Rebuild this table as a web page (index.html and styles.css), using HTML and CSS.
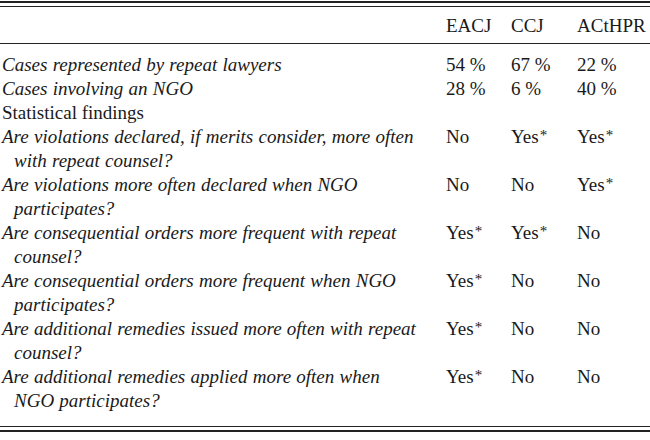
FILE: index.html
```html
<!DOCTYPE html>
<html>
<head>
<meta charset="utf-8">
<link rel="stylesheet" href="styles.css">
</head>
<body>
<div class="table">
  <div class="rule-thin"></div>
  <div class="head grid">
    <div class="cell"></div>
    <div class="cell">EACJ</div>
    <div class="cell">CCJ</div>
    <div class="cell">ACtHPR</div>
  </div>
  <div class="body grid">
    <div class="cell q">Cases represented by repeat lawyers</div>
    <div class="cell">54 %</div>
    <div class="cell">67 %</div>
    <div class="cell">22 %</div>

    <div class="cell q">Cases involving an NGO</div>
    <div class="cell">28 %</div>
    <div class="cell">6 %</div>
    <div class="cell">40 %</div>

    <div class="cell label">Statistical findings</div>
    <div class="cell"></div>
    <div class="cell"></div>
    <div class="cell"></div>

    <div class="cell q">Are violations declared, if merits consider, more often<br>with repeat counsel?</div>
    <div class="cell">No</div>
    <div class="cell">Yes<span class="star">*</span></div>
    <div class="cell">Yes<span class="star">*</span></div>

    <div class="cell q">Are violations more often declared when NGO<br>participates?</div>
    <div class="cell">No</div>
    <div class="cell">No</div>
    <div class="cell">Yes<span class="star">*</span></div>

    <div class="cell q">Are consequential orders more frequent with repeat<br>counsel?</div>
    <div class="cell">Yes<span class="star">*</span></div>
    <div class="cell">Yes<span class="star">*</span></div>
    <div class="cell">No</div>

    <div class="cell q">Are consequential orders more frequent when NGO<br>participates?</div>
    <div class="cell">Yes<span class="star">*</span></div>
    <div class="cell">No</div>
    <div class="cell">No</div>

    <div class="cell q">Are additional remedies issued more often with repeat<br>counsel?</div>
    <div class="cell">Yes<span class="star">*</span></div>
    <div class="cell">No</div>
    <div class="cell">No</div>

    <div class="cell q">Are additional remedies applied more often when<br>NGO participates?</div>
    <div class="cell">Yes<span class="star">*</span></div>
    <div class="cell">No</div>
    <div class="cell">No</div>
  </div>
  <div class="rule-thin"></div>
  <div class="rule-thick"></div>
</div>
</body>
</html>
```

FILE: styles.css
```css
html, body {
  margin: 0;
  padding: 0;
  background: #ffffff;
}

body {
  font-family: "Liberation Serif", "Times New Roman", serif;
  font-size: 19px;
  line-height: 24px;
  color: #1a1a1a;
}

.table {
  width: 650px;
  margin-top: 1px;
  border-top: 2px solid #222222;
}

.rule-thin {
  margin-top: 3px;
  height: 1px;
  background: #222222;
}

.rule-thick {
  margin-top: 3px;
  height: 2px;
  background: #222222;
}

.grid {
  display: grid;
  grid-template-columns: 446px 65px 66px 73px;
}

.head {
  padding: 7px 0 5px;
  border-bottom: 1px solid #222222;
}

.body {
  padding: 9px 0 10px;
}

.cell {
  white-space: nowrap;
}

.q {
  font-style: italic;
  padding-left: 14px;
  text-indent: -12px;
  word-spacing: 0.5px;
}

.label {
  padding-left: 2px;
}

.star {
  font-size: 15px;
  margin-left: 1px;
  vertical-align: 3px;
  line-height: 0;
}
```
